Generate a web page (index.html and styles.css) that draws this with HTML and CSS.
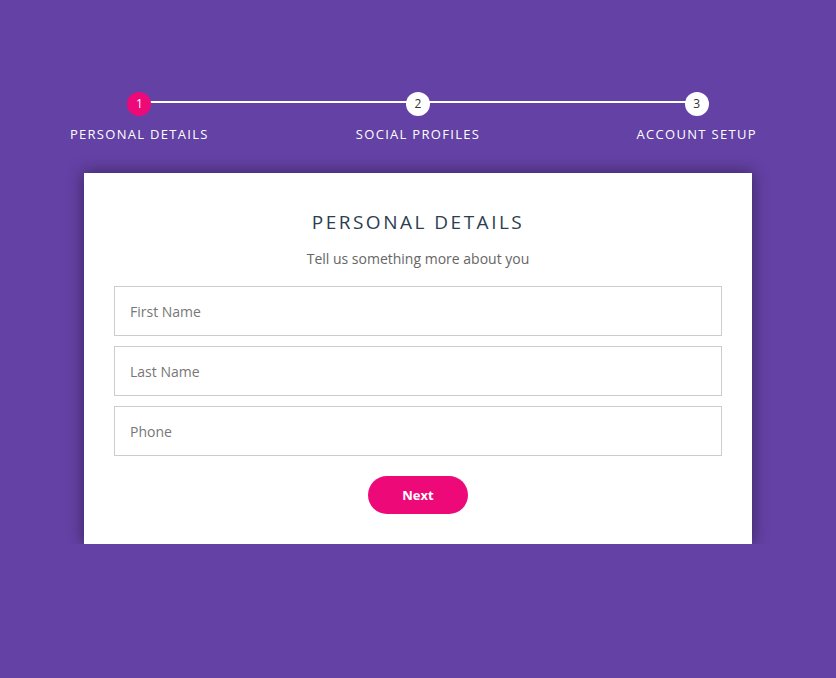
FILE: index.html
```html
<!DOCTYPE html>
<html>
<head>
<meta charset="utf-8">
<link rel="stylesheet" href="styles.css">
</head>
<body>
<div class="page">
  <ul class="progress">
    <li class="step active"><span class="dot">1</span><span class="label">Personal Details</span></li>
    <li class="step"><span class="dot">2</span><span class="label">Social Profiles</span></li>
    <li class="step"><span class="dot">3</span><span class="label">Account Setup</span></li>
  </ul>
  <form class="card">
    <h2 class="title">Personal Details</h2>
    <h3 class="subtitle">Tell us something more about you</h3>
    <input class="field" type="text" placeholder="First Name">
    <input class="field" type="text" placeholder="Last Name">
    <input class="field" type="text" placeholder="Phone">
    <button class="next" type="button">Next</button>
  </form>
</div>
</body>
</html>
```
FILE: styles.css
```css
html, body {
  margin: 0;
  padding: 0;
  background: #6441a5;
  font-family: "Open Sans", "Liberation Sans", sans-serif;
}
.page {
  padding-top: 92px;
}
.progress {
  list-style: none;
  margin: 0;
  padding: 0;
  display: flex;
}
.step {
  flex: 1;
  display: flex;
  flex-direction: column;
  align-items: center;
  position: relative;
}
.step + .step::before {
  content: "";
  position: absolute;
  top: 9px;
  left: -50%;
  width: 100%;
  height: 2px;
  background: #fff;
  z-index: 0;
}
.dot {
  position: relative;
  z-index: 1;
  width: 24px;
  height: 24px;
  border-radius: 50%;
  background: #fff;
  color: #333;
  font-size: 12px;
  line-height: 24px;
  text-align: center;
}
.step.active .dot {
  background: #ee0979;
  color: #fff;
}
.label {
  margin-top: 9px;
  color: #fff;
  font-size: 13px;
  line-height: 18px;
  text-transform: uppercase;
  letter-spacing: 1.3px;
}
.card {
  width: 608px;
  margin: 30px auto 0;
  padding: 37px 30px 30px;
  background: #fff;
  box-shadow: 0 0 15px 1px rgba(0, 0, 0, 0.4);
  display: flex;
  flex-direction: column;
  align-items: center;
}
.title {
  margin: 0;
  font-size: 19px;
  line-height: 24px;
  font-weight: 400;
  text-transform: uppercase;
  letter-spacing: 2.5px;
  color: #2c3e50;
}
.subtitle {
  margin: 16px 0 18px;
  font-size: 14px;
  line-height: 18px;
  font-weight: 400;
  color: #666;
}
.field {
  box-sizing: border-box;
  width: 100%;
  height: 50px;
  margin: 0 0 10px;
  padding: 15px;
  border: 1px solid #ccc;
  border-radius: 0;
  font-family: inherit;
  font-size: 14px;
  color: #2c3e50;
  outline: none;
}
.field::placeholder {
  color: #777;
}
.next {
  margin-top: 10px;
  width: 100px;
  height: 38px;
  border: 0;
  border-radius: 25px;
  background: #ee0979;
  color: #fff;
  font-family: inherit;
  font-weight: 700;
  font-size: 13px;
}
```
